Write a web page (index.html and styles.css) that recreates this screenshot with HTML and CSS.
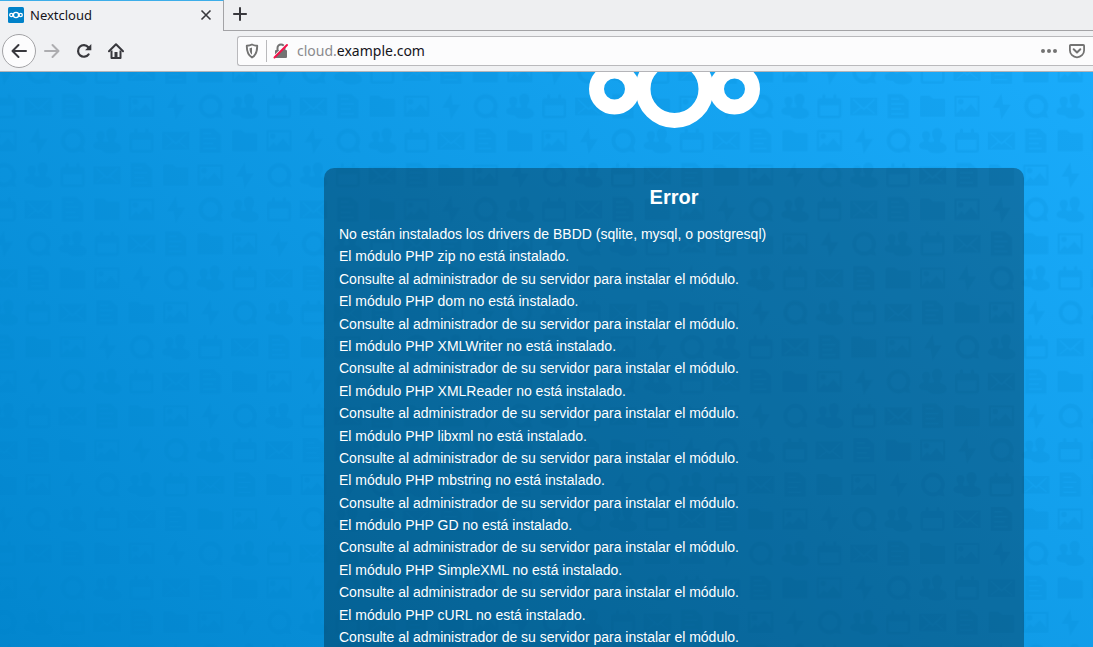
FILE: index.html
```html
<!DOCTYPE html>
<html lang="es">
<head>
<meta charset="utf-8">
<title>Nextcloud</title>
<link rel="stylesheet" href="styles.css">
</head>
<body>
<header class="chrome">
  <div class="tabs">
    <div class="tab">
      <svg class="favicon" viewBox="0 0 16 16" aria-hidden="true">
        <rect width="16" height="16" rx="1.5" fill="#0082c9"/>
        <g fill="none" stroke="#fff" stroke-width="1.3"><circle cx="8" cy="8" r="2.6"/><circle cx="3.3" cy="8" r="1.6"/><circle cx="12.7" cy="8" r="1.6"/></g>
      </svg>
      <span class="tab-title">Nextcloud</span>
      <button class="icon-button" type="button" aria-label="Cerrar pestaña">
        <svg viewBox="0 0 16 16"><path d="M3.5 3.5l9 9M12.5 3.5l-9 9" stroke-width="1.6"/></svg>
      </button>
    </div>
    <div class="tab-rest">
      <button class="icon-button" type="button" aria-label="Nueva pestaña">
        <svg viewBox="0 0 16 16"><path d="M8 1.2v13.6M1.2 8h13.6" stroke-width="2"/></svg>
      </button>
    </div>
  </div>
  <nav class="toolbar">
    <button class="icon-button back" type="button" aria-label="Atrás">
      <svg viewBox="0 0 16 16"><path d="M15 8H1.8M7.5 2L1.500 8l6 6" stroke-width="2" stroke-linecap="round" stroke-linejoin="round"/></svg>
    </button>
    <button class="icon-button forward" type="button" aria-label="Adelante" disabled>
      <svg viewBox="0 0 16 16"><path d="M1 8h13.2M8.500 2l6 6-6 6" stroke-width="2" stroke-linecap="round" stroke-linejoin="round"/></svg>
    </button>
    <button class="icon-button" type="button" aria-label="Recargar">
      <svg viewBox="0 0 16 16"><path d="M12.600 11.300A5.800 5.800 0 1 1 12.300 4.200" stroke-width="2.200" stroke-linecap="round"/><path d="M15.300 1v6.200H9.100z" fill="#38383d" stroke="none"/></svg>
    </button>
    <button class="icon-button" type="button" aria-label="Inicio">
      <svg viewBox="0 0 16 16"><path d="M1 8.300L8 1.300l7 7" stroke-width="2" stroke-linecap="round" stroke-linejoin="round"/><path d="M3.500 7.500V15h9V7.500" stroke-width="2" stroke-linejoin="round"/><path d="M6.500 15V9h3v6z" fill="#38383d" stroke="none"/></svg>
    </button>
    <div class="urlbar">
      <svg class="small-icon shield" viewBox="0 0 16 16" aria-hidden="true"><path d="M8 1.500c1.800.9 3.400 1.200 5.200 1.300.1 5.700-1 9.200-5.200 11.700C3.800 12 2.700 8.500 2.800 2.800 4.600 2.700 6.200 2.400 8 1.500z" fill="none" stroke="#737373" stroke-width="1.900" stroke-linejoin="round"/><path d="M8 4.500v7.200C6.200 10.200 5.600 8.500 5.500 5.200c1-.1 1.700-.3 2.500-.7z" fill="#737373"/></svg>
      <svg class="small-icon lock" viewBox="0 0 16 16" aria-hidden="true"><rect x="2" y="7" width="12" height="8" rx="1" fill="#737373"/><path d="M4.500 7.500V5a3.500 3.500 0 0 1 7 0v2.500" fill="none" stroke="#737373" stroke-width="2"/><path d="M1.200 13.200L12.700 1.700" stroke="#fcfcfd" stroke-width="1.500"/><path d="M1.500 14.500L14 2" stroke="#f5114a" stroke-width="2" stroke-linecap="round"/></svg>
      <label class="subdomain" for="url">cloud.</label>
      <input class="url" id="url" type="text" value="example.com" aria-label="Dirección">
      <button class="icon-button muted" type="button" aria-label="Acciones de página">
        <svg viewBox="0 0 16 16"><g fill="#737373" stroke="none"><circle cx="2" cy="8" r="2"/><circle cx="8" cy="8" r="2"/><circle cx="14" cy="8" r="2"/></g></svg>
      </button>
      <button class="icon-button muted" type="button" aria-label="Guardar en Pocket">
        <svg viewBox="0 0 16 16"><path d="M1.700 2h12.600a.8.8 0 0 1 .8.800v4.400a7.100 7.100 0 0 1-14.200 0V2.800a.8.8 0 0 1 .8-.8z" stroke-width="1.800"/><path d="M4.700 6.300L8 9.400l3.300-3.100" stroke-width="2" stroke-linecap="round" stroke-linejoin="round"/></svg>
      </button>
    </div>
  </nav>
</header>
<main class="page">
  <svg class="backdrop" aria-hidden="true">
    <defs>
      <g id="strip" fill-rule="evenodd">
        <path d="M7 9h3V6.500a1.500 1.500 0 0 1 3 0V9h8V6.500a1.500 1.500 0 0 1 3 0V9h2a3 3 0 0 1 3 3v14a3 3 0 0 1-3 3H8a3 3 0 0 1-3-3V12a3 3 0 0 1 2-3zM7.500 16v9.500a1 1 0 0 0 1 1h17a1 1 0 0 0 1-1V16z"/>
        <path transform="translate(34.400)" d="M3.500 8.500h27v17.500h-27zM6 10.500l7.500 7.500-7.500 6 .8.800 7.600-6 2.700 2.300 2.700-2.300 7.600 6 .8-.8-7.500-6 7.500-7.500-.8-.8-10.300 9-10.300-9z"/>
        <path transform="translate(68.800)" d="M6.500 5h14l7 6v18h-21zM10 9v1.500h8V9zM10 14v1.500h13V14zM10 19v1.500h10V19zM10 24v1.500h13V24z"/>
        <path transform="translate(103.200)" d="M6 6.500h7.500l4 3H28a1.500 1.500 0 0 1 1.500 1.500v15.500a1 1 0 0 1-1 1h-23a1 1 0 0 1-1-1V8A1.500 1.500 0 0 1 6 6.500z"/>
        <path transform="translate(137.600)" d="M5.500 6.500h23a1 1 0 0 1 1 1v19a1 1 0 0 1-1 1h-23a1 1 0 0 1-1-1v-19a1 1 0 0 1 1-1zM6.500 8.500v16l5-5.500 3 3 6.500-7 6.500 7.500v-14zM13.500 12.500a2.700 2.700 0 1 1-5.400 0 2.700 2.700 0 1 1 5.400 0z"/>
        <path transform="translate(172)" d="M17 4.500L8.500 18.500H15L17 30l9-14.500h-7.500z"/>
        <path transform="translate(206.400)" d="M17.200 5a12 12 0 0 1 10.300 18.200l1.800 5.600-6.200-1.200A12 12 0 1 1 17.200 5zM17.200 9.200a7.900 7.900 0 1 0 0 15.800 7.900 7.900 0 1 0 0-15.800z"/>
        <path transform="translate(240.800)" d="M21.500 4.500c3.500 0 5 2.500 5 5.500 0 2.200-.8 4.500-2 6v2.500c3 1 6.500 2.500 6.500 6 0 4-5 5-10 5s-8-1-9-3.500c-4.500 0-8.500-.7-8.500-4 0-2.500 2.500-3.500 4.700-4v-2C7 14.800 6.500 13 6.500 11.500 6.500 9 8 7.500 10.500 7.500s3.900 1.500 3.900 4c0 1.500-.5 3.300-1.400 4.500v2l2.300.8 3.200-.8v-2c-1.200-1.500-2-3.800-2-6 0-3 1.500-5.500 5-5.500z"/>
      </g>
      <g id="row"><use href="#strip"/><use href="#strip" x="275.200"/></g>
      <pattern id="sheet" patternUnits="userSpaceOnUse" x="-13.200" y="-17.200" width="275.200" height="447.200">
        <use href="#row" x="-172" y="0"/>
        <use href="#row" x="0" y="34.400"/>
        <use href="#row" x="-137.600" y="68.800"/>
        <use href="#row" x="-206.400" y="103.200"/>
        <use href="#row" x="0" y="137.600"/>
        <use href="#row" x="-172" y="172"/>
        <use href="#row" x="-34.400" y="206.400"/>
        <use href="#row" x="-240.800" y="240.800"/>
        <use href="#row" x="-68.800" y="275.200"/>
        <use href="#row" x="-137.600" y="309.600"/>
        <use href="#row" x="-240.800" y="344"/>
        <use href="#row" x="-34.400" y="378.400"/>
        <use href="#row" x="-103.200" y="412.800"/>
      </pattern>
    </defs>
    <rect width="100%" height="100%" fill="url(#sheet)"/>
  </svg>
  <div class="content">
    <svg class="logo" viewBox="0 0 172 56" role="img" aria-label="Nextcloud">
      <g fill="none" stroke="#fff" stroke-width="15"><circle cx="26.500" cy="17" r="18"/><circle cx="86.500" cy="17" r="31.500"/><circle cx="146.500" cy="17" r="18"/></g>
    </svg>
    <section class="error">
      <h1 class="error-title">Error</h1>
      <ul class="error-list">
        <li>No están instalados los drivers de BBDD (sqlite, mysql, o postgresql)</li>
        <li>El módulo PHP zip no está instalado.<p>Consulte al administrador de su servidor para instalar el módulo.</p></li>
        <li>El módulo PHP dom no está instalado.<p>Consulte al administrador de su servidor para instalar el módulo.</p></li>
        <li>El módulo PHP XMLWriter no está instalado.<p>Consulte al administrador de su servidor para instalar el módulo.</p></li>
        <li>El módulo PHP XMLReader no está instalado.<p>Consulte al administrador de su servidor para instalar el módulo.</p></li>
        <li>El módulo PHP libxml no está instalado.<p>Consulte al administrador de su servidor para instalar el módulo.</p></li>
        <li>El módulo PHP mbstring no está instalado.<p>Consulte al administrador de su servidor para instalar el módulo.</p></li>
        <li>El módulo PHP GD no está instalado.<p>Consulte al administrador de su servidor para instalar el módulo.</p></li>
        <li>El módulo PHP SimpleXML no está instalado.<p>Consulte al administrador de su servidor para instalar el módulo.</p></li>
        <li>El módulo PHP cURL no está instalado.<p>Consulte al administrador de su servidor para instalar el módulo.</p></li>
      </ul>
    </section>
  </div>
</main>
</body>
</html>
```
FILE: styles.css
```css
* {
  box-sizing: border-box;
}

body {
  margin: 0;
  height: 100vh;
  display: flex;
  flex-direction: column;
  overflow: hidden;
}

/* Browser frame */
.chrome {
  flex: none;
  background: #f0f1f3;
  border-bottom: 1px solid #b4b4b8;
  font-family: "Noto Sans", sans-serif;
  color: #15141a;
}

.tabs {
  display: flex;
  height: 31px;
}

.tab {
  display: flex;
  align-items: center;
  gap: 6px;
  width: 224px;
  padding: 0 9px 2px 8px;
  border-top: 1px solid #3daee9;
  border-right: 1px solid #a3a3a6;
  font-size: 13px;
}

.tab-title {
  flex: 1;
}

.tab-rest {
  flex: 1;
  display: flex;
  align-items: center;
  padding: 0 8px 2px;
  border-bottom: 1px solid #a3a3a6;
  background: #eeeff1;
}

.favicon,
.small-icon {
  flex: none;
  width: 16px;
  height: 16px;
}

.icon-button {
  flex: none;
  display: flex;
  width: 16px;
  height: 16px;
  padding: 0;
  border: 0;
  background: none;
}

.icon-button svg {
  width: 16px;
  height: 16px;
  fill: none;
  stroke: #38383d;
}

.toolbar {
  display: flex;
  align-items: center;
  gap: 16px;
  height: 40px;
  padding-left: 2px;
}

.back {
  width: 34px;
  height: 34px;
  margin-right: -8px;
  align-items: center;
  justify-content: center;
  border: 1px solid #a3a3a6;
  border-radius: 50%;
  background: #fcfcfd;
}

.forward svg {
  stroke: #adadb0;
}

.muted svg {
  stroke: #737373;
}

.urlbar {
  flex: 1;
  display: flex;
  align-items: center;
  gap: 12px;
  height: 30px;
  margin-left: 97px;
  padding: 0 8px 0 6px;
  border: 1px solid #b9b9bc;
  border-right: 0;
  border-radius: 3px 0 0 3px;
  background: #fcfcfd;
  font-size: 14px;
}

.lock {
  margin-right: -4px;
}

.shield {
  box-sizing: content-box;
  margin-right: -6px;
  padding-right: 6px;
  border-right: 1px solid #b9b9bc;
  height: 22px;
}

.subdomain {
  margin-right: -12px;
  padding-bottom: 2px;
  color: #8a8a8e;
}

.url {
  flex: 1;
  min-width: 0;
  padding: 0 0 2px;
  border: 0;
  outline: 0;
  background: none;
  font: inherit;
  color: inherit;
}

/* Nextcloud page */
.page {
  flex: 1;
  display: grid;
  min-height: 0;
  overflow: hidden;
  background: linear-gradient(40deg, #0082c9 -10%, #1cafff 108%);
  font-family: "Liberation Sans", Arial, sans-serif;
  font-size: 14px;
  line-height: 1.6;
  color: #fff;
}

.backdrop,
.content {
  grid-area: 1 / 1;
  min-height: 0;
}

.backdrop {
  width: 100%;
  height: 100%;
  fill: #0082c9;
  opacity: 0.14;
}

.content {
  display: flex;
  flex-direction: column;
  align-items: center;
  gap: 40px;
  padding-left: 255px;
  z-index: 1;
}

.logo {
  flex: none;
  width: 172px;
  height: 56px;
}

.error {
  flex: none;
  width: 100%;
  max-width: 700px;
  padding: 15px;
  border-radius: 10px 10px 0 0;
  background: rgba(0, 0, 0, 0.3);
}

.error-title {
  margin: 0 0 12px;
  font-size: 20px;
  line-height: 28px;
  text-align: center;
}

.error-list {
  margin: 0;
  padding: 0;
  list-style: none;
}

.error-list p {
  margin: 0;
}
```
